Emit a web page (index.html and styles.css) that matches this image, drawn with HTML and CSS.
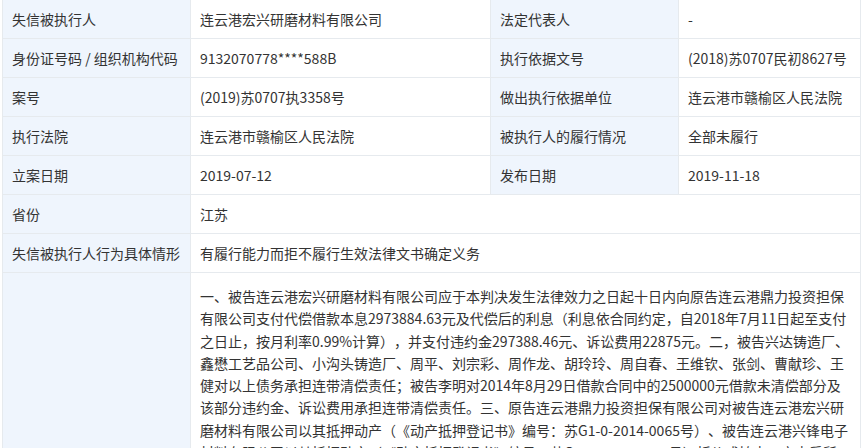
FILE: index.html
```html
<!DOCTYPE html>
<html>
<head>
    <meta charset="utf-8">
    <link rel="stylesheet" href="styles.css">
</head>
<body>
    <table class="info-table">
        <colgroup>
            <col class="col-label">
            <col class="col-value">
            <col class="col-label2">
            <col class="col-value2">
        </colgroup>
        <tr>
            <th>失信被执行人</th>
            <td>连云港宏兴研磨材料有限公司</td>
            <th>法定代表人</th>
            <td>-</td>
        </tr>
        <tr>
            <th>身份证号码 / 组织机构代码</th>
            <td>9132070778****588B</td>
            <th>执行依据文号</th>
            <td>(2018)苏0707民初8627号</td>
        </tr>
        <tr>
            <th>案号</th>
            <td>(2019)苏0707执3358号</td>
            <th>做出执行依据单位</th>
            <td>连云港市赣榆区人民法院</td>
        </tr>
        <tr>
            <th>执行法院</th>
            <td>连云港市赣榆区人民法院</td>
            <th>被执行人的履行情况</th>
            <td>全部未履行</td>
        </tr>
        <tr>
            <th>立案日期</th>
            <td>2019-07-12</td>
            <th>发布日期</th>
            <td>2019-11-18</td>
        </tr>
        <tr>
            <th>省份</th>
            <td colspan="3">江苏</td>
        </tr>
        <tr>
            <th>失信被执行人行为具体情形</th>
            <td colspan="3">有履行能力而拒不履行生效法律文书确定义务</td>
        </tr>
        <tr class="long-row">
            <th>生效法律文书确定的义务</th>
            <td colspan="3" class="long-text">一、被告连云港宏兴研磨材料有限公司应于本判决发生法律效力之日起十日内向原告连云港鼎力投资担保有限公司支付代偿借款本息2973884.63元及代偿后的利息（利息依合同约定，自2018年7月11日起至支付之日止，按月利率0.99%计算），并支付违约金297388.46元、诉讼费用22875元。二，被告兴达铸造厂、鑫懋工艺品公司、小沟头铸造厂、周平、刘宗彩、周作龙、胡玲玲、周自春、王维钦、张剑、曹献珍、王健对以上债务承担连带清偿责任；被告李明对2014年8月29日借款合同中的2500000元借款未清偿部分及该部分违约金、诉讼费用承担连带清偿责任。三、原告连云港鼎力投资担保有限公司对被告连云港宏兴研磨材料有限公司以其抵押动产（《动产抵押登记书》编号：苏G1-0-2014-0065号）、被告连云港兴锋电子材料有限公司以其抵押动产（《动产抵押登记书》编号：苏G1-0-201300113号）折价或拍卖、变卖后所得价款在最高债权额范围内享有优先受偿权。四、驳回原告连云港鼎力投资担保有限公司的其他诉讼请求。</td>
        </tr>
    </table>
</body>
</html>
```

FILE: styles.css
```css
/* 页面基础 */
body {
    margin: 0;
    padding: 0 0 0 2px;
    background: #ffffff;
    font-family: "Noto Sans CJK SC", sans-serif;
    font-size: 14px;
    color: #333333;
    overflow: hidden;
    text-spacing-trim: space-all;
    font-kerning: none;
}

/* 信息表格 */
.info-table {
    width: 858px;
    margin-top: -1px;
    border-collapse: collapse;
    table-layout: fixed;
}

.col-label { width: 188px; }
.col-value { width: 300px; }
.col-label2 { width: 188px; }
.col-value2 { width: 182px; }

.info-table th,
.info-table td {
    height: 38px;
    padding: 0 8px 0 9px;
    border: 1px solid #e6eaee;
    text-align: left;
    font-weight: normal;
    white-space: nowrap;
}

.info-table th {
    background: #eff5fd;
    color: #333333;
}

/* 判决内容 */
.long-row th {
    vertical-align: middle;
    color: #eff5fd;
}

.long-text {
    white-space: normal !important;
    line-height: 22.3px;
    padding-top: 12px !important;
    padding-bottom: 12px !important;
    padding-right: 10px !important;
    vertical-align: top;
}
```
